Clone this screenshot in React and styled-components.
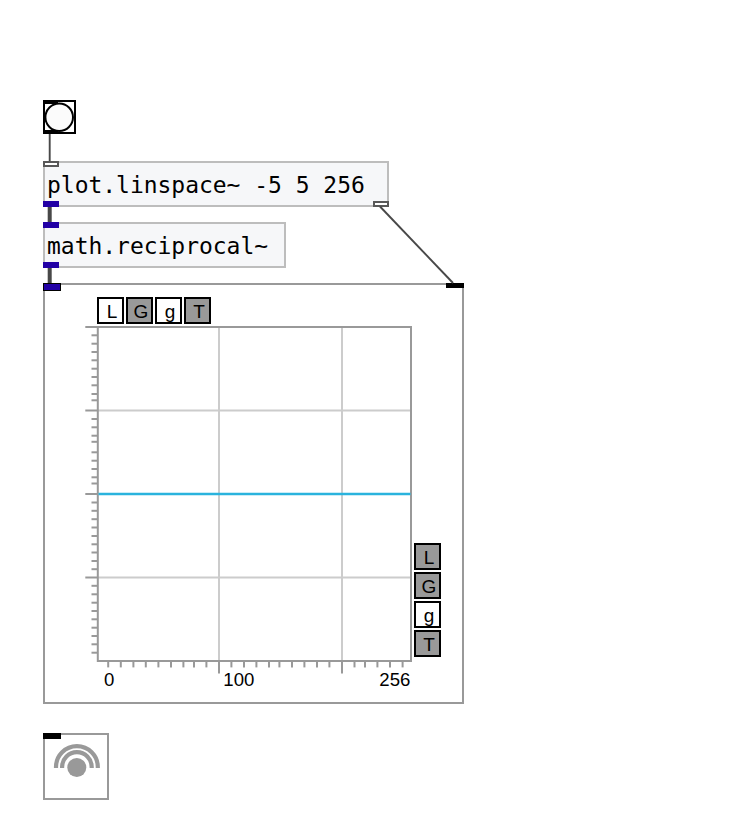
import React from "react";
import styled, { createGlobalStyle } from "styled-components";

const GlobalStyle = createGlobalStyle`
  body { margin: 0; background: #fff; }
  *, *::before, *::after { box-sizing: border-box; }
`;

const Canvas = styled.main`
  position: relative;
  width: 755px;
  height: 838px;
  overflow: hidden;
  background: #fff;
`;

const Cables = styled.svg`
  position: absolute;
  inset: 0;
  z-index: 1;
  pointer-events: none;
`;

/* A patch node: its spot on the free canvas is part of the patch. */
const Node = styled.section`
  position: absolute;
  left: 43px;
  top: ${(p) => p.$y}px;
  width: ${(p) => p.$w}px;
  height: ${(p) => p.$h}px;
  display: flex;
  flex-direction: column;
`;

const BangNode = styled(Node)`
  border: 2px solid #000;
`;

const ObjectNode = styled(Node)`
  border: 2px solid #bdbdbd;
  background: #f6f7f9;
`;

const PanelNode = styled(Node)`
  border: 2px solid #999;
  background: #fff;
`;

const Ports = styled.div`
  flex: none;
  display: flex;
  justify-content: space-between;
  height: ${(p) => p.$h || 6}px;
  margin: ${(p) => (p.$outlets ? "0 -2px -2px" : "-2px -2px 0")};
`;

const SignalPort = styled.i`
  width: 16px;
  background: #2200a5;
`;

const ControlPort = styled.i`
  width: 16px;
  border: 2px solid #585858;
  background: #fff;
`;

const SignalInlet = styled.i`
  width: 18px;
  border: 1px solid #000;
  background: #2200a5;
`;

const SolidPort = styled.i`
  width: ${(p) => p.$w || 18}px;
  height: ${(p) => p.$h || 5}px;
  background: #000;
`;

const ObjectText = styled.span`
  flex: 1;
  display: flex;
  align-items: center;
  padding: 2px 0 0 2px;
  color: #000;
  font: 23px/28px "DejaVu Sans Mono", monospace;
  letter-spacing: -0.03px;
  white-space: pre;
`;

const BangRing = styled.svg`
  display: block;
  margin: -2px 0;
  flex: none;
`;

const SpeakerIcon = styled.svg`
  display: block;
  flex: none;
  margin-top: -3px;
`;

const PlotLayout = styled.div`
  flex: 1;
  display: grid;
  grid-template-columns: 369px 27px;
  grid-template-rows: 27px 1fr;
  padding-top: 6px;
`;

const ToggleRow = styled.div`
  display: flex;
  justify-content: flex-start;
  gap: 2px;
  padding-left: 52px;
  grid-area: 1 / 1;
`;

const ToggleColumn = styled.div`
  display: flex;
  flex-direction: column;
  justify-content: flex-end;
  gap: 2px;
  padding-bottom: 45px;
  grid-area: 2 / 2;
`;

const Toggle = styled.button`
  flex: none;
  display: flex;
  align-items: flex-start;
  justify-content: center;
  width: 27px;
  height: 27px;
  margin: 0;
  padding: 3px 0 0 3px;
  border: 2px solid #000;
  border-radius: 0;
  background: ${(p) => (p.$on ? "#999" : "#fff")};
  color: #000;
  font: 19px/19px "Liberation Sans", Arial, sans-serif;
`;

const Chart = styled.svg`
  grid-area: 2 / 1;
  display: block;
  overflow: visible;
  font: 18.6px "Liberation Sans", Arial, sans-serif;
`;

const yMinor = [
  335.3, 343.7, 352, 360.3, 368.7, 377, 385.3, 394, 400.3,
  419, 427.3, 435.7, 441.8, 452.3, 460.7, 469, 477.3, 483.5,
  502.5, 510.8, 519.2, 527.5, 536, 544.3, 552.5, 561, 569.2,
  585.8, 594.3, 602.7, 611, 619.3, 627.7, 636, 644.3, 652.7,
];
const yMajor = [327, 410.5, 494, 577.5];
const xMinor = [
  108.2, 120.8, 133.4, 145.8, 158.4, 171, 183.4, 194, 206.4,
  231.4, 244, 256.4, 269, 279.4, 292, 304.4, 317, 329.4,
  354.5, 365, 377.4, 390, 402.6,
];
const xMajor = [219, 342];

function Plot() {
  return (
    <Chart width="369" height="377" viewBox="45 324 369 377">
      <g stroke="#ccc" strokeWidth="2">
        {xMajor.map((x) => <path key={x} d={`M${x} 328V660`} />)}
        {[410.5, 577.5].map((y) => <path key={y} d={`M98 ${y}H410`} />)}
      </g>
      <g stroke="#999" strokeWidth="2" fill="none">
        <rect x="97.8" y="327" width="313.2" height="334" />
        {yMajor.map((y) => <path key={y} d={`M85.3 ${y}H98`} />)}
        {yMinor.map((y) => <path key={y} d={`M91.5 ${y}H98`} />)}
        {xMajor.map((x) => <path key={x} d={`M${x} 661V673.5`} />)}
        {xMinor.map((x) => <path key={x} d={`M${x} 661V667.4`} />)}
      </g>
      <path d="M98.5 494H410.5" stroke="#2ab3dd" strokeWidth="2.3" />
      <text x="104" y="686">0</text>
      <text x="223.3" y="686">100</text>
      <text x="379.3" y="686">256</text>
    </Chart>
  );
}

function Toggles({ as: Group, active }) {
  return (
    <Group>
      {["L", "G", "g", "T"].map((name) => (
        <Toggle key={name} $on={active.includes(name)}>{name}</Toggle>
      ))}
    </Group>
  );
}

export default function App() {
  return (
    <>
      <GlobalStyle />
      <Canvas>
        <Cables width="755" height="838" fill="none" stroke="#484848">
          <path d="M49.7 134V161" strokeWidth="1.9" />
          <path d="M49.7 207V222M49.7 268V283" strokeWidth="4" />
          <path d="M380 206.5L453 283" strokeWidth="1.9" />
        </Cables>

        <BangNode $y={100} $w={33} $h={34}>
          <Ports $h={4}>
            <SolidPort $w={15} $h={4} />
          </Ports>
          <BangRing width="29" height="30" viewBox="45 102 29 30">
            <circle cx="59.2" cy="117.2" r="13.8" fill="#fbfbfb" stroke="#000" strokeWidth="2" />
            <path d="M45 103H58M45 131H58" stroke="#000" strokeWidth="2" />
          </BangRing>
        </BangNode>

        <ObjectNode $y={161} $w={346} $h={46}>
          <Ports>
            <ControlPort />
          </Ports>
          <ObjectText>plot.linspace~ -5 5 256</ObjectText>
          <Ports $outlets>
            <SignalPort />
            <ControlPort />
          </Ports>
        </ObjectNode>

        <ObjectNode $y={222} $w={243} $h={46}>
          <Ports>
            <SignalPort />
          </Ports>
          <ObjectText>math.reciprocal~</ObjectText>
          <Ports $outlets>
            <SignalPort />
          </Ports>
        </ObjectNode>

        <PanelNode $y={283} $w={421} $h={421}>
          <Ports $h={8}>
            <SignalInlet />
            <SolidPort />
          </Ports>
          <PlotLayout>
            <Toggles as={ToggleRow} active={["G", "T"]} />
            <Plot />
            <Toggles as={ToggleColumn} active={["L", "G", "T"]} />
          </PlotLayout>
        </PanelNode>

        <PanelNode $y={733} $w={66} $h={67}>
          <Ports $h={5}>
            <SolidPort $h={6} />
          </Ports>
          <SpeakerIcon width="62" height="63" viewBox="45 735 62 63" fill="none" stroke="#999" strokeWidth="4.2">
            <path d="M56 768V767A20.9 20.9 0 0 1 97.8 767V768" />
            <path d="M62.1 768V767A14.8 14.8 0 0 1 91.7 767V768" />
            <circle cx="76.8" cy="767.5" r="9.5" fill="#999" stroke="none" />
          </SpeakerIcon>
        </PanelNode>
      </Canvas>
    </>
  );
}
